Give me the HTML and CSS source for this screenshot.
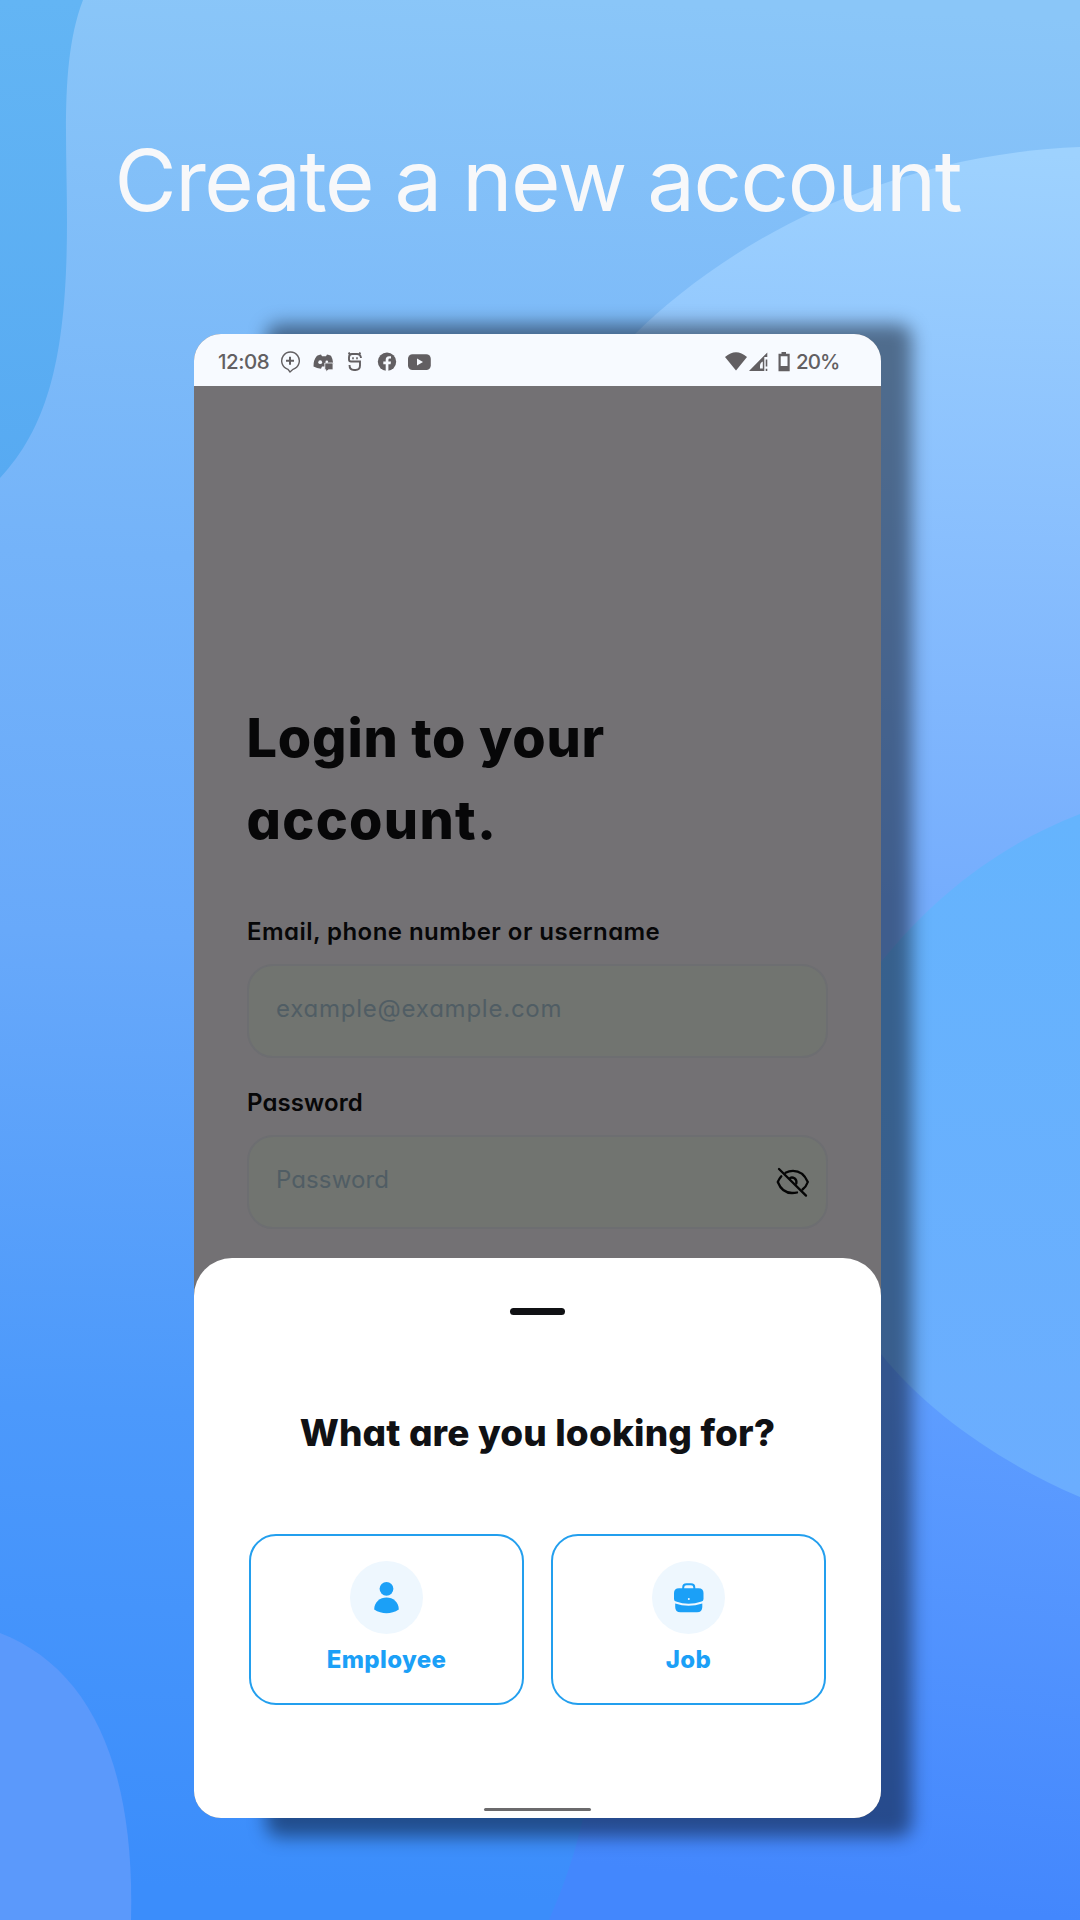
FILE: index.html
```html
<!DOCTYPE html>
<html lang="en">
<head>
<meta charset="utf-8">
<title>Create a new account</title>
<link rel="stylesheet" href="styles.css">
</head>
<body>
<main class="page">
  <svg class="backdrop" viewBox="0 0 1080 1920" aria-hidden="true">
    <defs>
      <linearGradient id="sky" gradientUnits="userSpaceOnUse" x1="570" y1="0" x2="500" y2="1900">
        <stop offset="0" stop-color="#8ac6f8"/><stop offset=".3" stop-color="#74b3f9"/><stop offset=".5" stop-color="#68a9fa"/><stop offset=".75" stop-color="#4c99fb"/><stop offset="1" stop-color="#3b8dfb"/>
      </linearGradient>
      <linearGradient id="corner" x1="0" y1="0" x2="0" y2="1">
        <stop offset="0" stop-color="#63b5f4"/><stop offset="1" stop-color="#57aaf2"/>
      </linearGradient>
      <linearGradient id="wave" gradientUnits="userSpaceOnUse" x1="960" y1="150" x2="930" y2="900">
        <stop offset="0" stop-color="#9ed2fe"/><stop offset="1" stop-color="#75adfd"/>
      </linearGradient>
      <linearGradient id="disc" gradientUnits="userSpaceOnUse" x1="1000" y1="814" x2="980" y2="1490">
        <stop offset="0" stop-color="#65b4fd"/><stop offset="1" stop-color="#6badfe"/>
      </linearGradient>
      <linearGradient id="floor" gradientUnits="userSpaceOnUse" x1="960" y1="1380" x2="900" y2="1900">
        <stop offset="0" stop-color="#5f9eff"/><stop offset="1" stop-color="#4387fd"/>
      </linearGradient>
    </defs>
    <rect width="1080" height="1920" fill="url(#sky)"/>
    <path fill="url(#corner)" d="M0 0H83C60 60 67 140 67 222C67 350 50 425 0 478Z"/>
    <path fill="url(#wave)" d="M1080 147C870 155 715 255 635 334L700 1000H1080Z"/>
    <path fill="url(#floor)" d="M549 1920C575 1860 580 1830 590 1790L860 1300L1080 1400V1920Z"/>
    <path fill="url(#disc)" d="M1080 814C1000 845 935 895 881 962L840 1160L881 1354C930 1415 1005 1465 1080 1497Z"/>
    <path fill="#5b99fb" d="M0 1633C90 1668 135 1765 131 1920H0Z"/>
  </svg>

  <h1 class="title">Create a new account</h1>

  <section class="phone">
    <div class="screen">
      <header class="status">
        <span class="clock">12:08</span>
        <svg class="notifications" viewBox="0 0 156 24" aria-hidden="true">
          <g fill="none" stroke="#625f62" stroke-width="1.4"><path d="M8 19.3A8.800 8.800 0 1 1 13 19.3L10 22Z"/><path stroke-width="2" d="M10 6.7V14.7M6 10.7H14"/></g>
          <path fill="#625f62" d="M37 5.800Q39 4.700 41 4.500L42 6.200H46L47 4.500Q49 4.700 51 5.800Q53 9 53.300 14L48 18.500L46 16.500H42L41 18.800Q37 18.500 33.500 16.500Q33.300 10 37 5.800Z"/>
          <circle cx="40.200" cy="12.200" r="1.900" fill="#f7faff"/><circle cx="46.800" cy="11.800" r="1.300" fill="#f7faff"/>
          <path fill="#625f62" stroke="#f7faff" stroke-width=".8" d="M44.800 13H53V19.800H48.500L46 21.800V19.800H44.800Z"/>
          <g fill="none" stroke="#625f62" stroke-width="1.900"><path d="M68.700 2.500L70 5M80.300 2.500L79 5M81 8Q80.500 4 77 4H72Q69 4 69 7.500V9.500Q69 11.500 71 11.500H80V15.500Q80 20 75.500 20H74Q69.500 20 69.500 15"/><path stroke-width="1.900" d="M72.200 8.300H73.800M76.200 8.300H77.800"/></g>
          <circle cx="107" cy="11.700" r="9.200" fill="#625f62"/>
          <path fill="#f7faff" d="M105.700 21V14.200H103.300V11.600H105.700V9.700Q105.700 6.200 109.100 6.200H111V8.600H109.800Q108.400 8.600 108.400 10V11.600H111L110.600 14.200H108.400V21Z"/>
          <rect x="128" y="4.200" width="22.800" height="15.800" rx="4.500" fill="#625f62"/><path fill="#f7faff" d="M137 8.500V15.500L143 12Z"/>
        </svg>
        <svg class="signals" viewBox="0 0 66 20" aria-hidden="true">
          <g fill="#625f62"><path d="M0 5Q11-4.500 22 5L11 18.500Z"/><path fill-rule="evenodd" d="M24 19L42.300 .5V5H39.300V19ZM35 16.500H37.800V9.500Q35 10.500 35 14Z"/><path d="M40.700 7.500H42.300V14.500H40.700ZM40.700 16.800H42.300V19H40.700Z"/><path fill-rule="evenodd" d="M53.500 1.700H56.500V0H61V1.700H64.700V19.200H53.500ZM55.700 4.200V14H62.500V4.200Z"/></g>
        </svg>
        <span class="battery">20%</span>
      </header>

      <div class="login">
        <h2 class="login-title"><span class="line">Login to your</span><span class="line line-wide">account.</span></h2>
        <div class="field">
          <span class="label">Email, phone number or username</span>
          <div class="input"><span class="placeholder">example@example.com</span></div>
        </div>
        <div class="field">
          <span class="label label-password">Password</span>
          <div class="input"><span class="placeholder placeholder-password">Password</span>
            <svg class="eye-off" viewBox="0 0 34 32" aria-hidden="true"><g fill="none" stroke="#050505" stroke-width="2.300" stroke-linecap="round"><path d="M9.500 5.800Q13 3.900 17 3.900C24 3.900 29 8.500 31.800 15Q30.300 19.500 26.500 22.500M5.300 9.300Q3 12 1.800 15C4.500 22 10 26 16 26Q19 26 21 25.500"/><path d="M14.200 11Q16 9.900 18.500 11.200Q21 13 20.300 16.500"/><path d="M3 2L30 28.600"/></g></svg>
          </div>
        </div>
      </div>

      <div class="sheet">
        <div class="handle"></div>
        <h3 class="question">What are you looking for?</h3>
        <div class="choices">
          <div class="choice">
            <svg class="badge" viewBox="0 0 73 73" aria-hidden="true"><circle cx="36.500" cy="36.500" r="36.500" fill="#eef7fe"/><g fill="#1ba0f7"><circle cx="36.500" cy="27.800" r="6.900"/><path d="M24.200 48.500C24.200 41 30 36.500 36.500 36.500S48.800 41 48.800 48.500Q43 52.300 36.500 52.300T24.200 48.500Z"/></g></svg>
            <span class="choice-name">Employee</span>
          </div>
          <div class="choice">
            <svg class="badge" viewBox="0 0 73 73" aria-hidden="true"><circle cx="36.500" cy="36.500" r="36.500" fill="#eef7fe"/><path fill="none" stroke="#1ba0f7" stroke-width="2" d="M31.200 28V26.500Q31.200 23.300 34.500 23.300H39Q42.300 23.300 42.300 26.500V28"/><g fill="#1ba0f7"><path d="M27 27.300H46.500Q51.500 27.300 51.500 32V38Q51.500 40 49.500 40.500Q36.500 45 24 40.500Q22 40 22 38V32Q22 27.300 27 27.300Z"/><path d="M23.200 42.500Q36.500 47 50.300 42.500V46Q50.300 51.300 45 51.300H28.500Q23.200 51.300 23.200 46Z"/></g><circle cx="36.800" cy="38" r="1" fill="#eef7fe"/></svg>
            <span class="choice-name choice-name-short">Job</span>
          </div>
        </div>
        <div class="home-bar"></div>
      </div>
    </div>
  </section>
</main>
</body>
</html>
```
FILE: styles.css
```css
* { box-sizing: border-box; }
body { margin: 0; font-family: Inter, sans-serif; }
h1, h2, h3 { margin: 0; }

.page {
  position: relative;
  width: 1080px;
  height: 1920px;
  overflow: hidden;
  padding-top: 131px;
}
.backdrop { position: absolute; inset: 0; width: 1080px; height: 1920px; }

.title {
  position: relative;
  font-size: 85px;
  line-height: 100px;
  font-weight: 400;
  letter-spacing: -1.450px;
  word-spacing: -1px;
  padding-left: 114.500px;
  white-space: nowrap;
  color: #f7f8fa;
}

.phone {
  position: relative;
  width: 687px;
  height: 1484px;
  margin: 103px 0 0 194px;
  font-feature-settings: "cv11";
}
.phone::before {
  content: "";
  position: absolute;
  left: 72px;
  top: -10px;
  width: 646px;
  height: 1513px;
  border-radius: 14px;
  background: rgba(0, 0, 8, .46);
  filter: blur(9px);
}
.screen {
  position: relative;
  height: 100%;
  border-radius: 27px;
  overflow: hidden;
  background: #737174;
}

.status {
  display: flex;
  align-items: center;
  height: 52px;
  padding: 2px 41px 0 24px;
  background: #f7faff;
  color: #625f62;
  font-size: 20.500px;
  font-weight: 500;
}
.clock { width: 52px; letter-spacing: -.450px; }
.notifications { width: 156px; height: 24px; margin: 1px auto 0 9.500px; }
.signals { width: 66px; height: 20px; margin-right: 5px; margin-top: 1px; }
.battery { width: 44px; letter-spacing: -.900px; }

.login { padding: 311px 53px 0; color: #070708; }
.login-title { font-size: 54px; line-height: 82px; font-weight: 800; margin-bottom: 55.500px; }
.line { display: block; letter-spacing: .800px; margin-left: -.500px; }
.line-wide { letter-spacing: 1.300px; }
.field { margin-bottom: 29px; }
.label {
  display: block;
  font-size: 24px;
  line-height: 30px;
  font-weight: 600;
  letter-spacing: .450px;
}
.label-password { letter-spacing: .100px; }
.input {
  display: flex;
  align-items: center;
  justify-content: space-between;
  height: 94px;
  margin-top: 17.500px;
  margin-bottom: 29.500px;
  padding: 0 16.500px 6px 27px;
  border: 2px solid #6d6e71;
  border-radius: 26px;
  background: #717470;
}
.placeholder { font-size: 24px; letter-spacing: .770px; color: #505d64; }
.placeholder-password { letter-spacing: .100px; }
.field { margin-bottom: 0; }
.eye-off { width: 34px; height: 32px; margin-top: 7px; }

.sheet {
  position: absolute;
  left: 0;
  right: 0;
  bottom: 0;
  height: 560px;
  display: flex;
  flex-direction: column;
  align-items: center;
  padding: 50px 55px 7px;
  border-radius: 38px 38px 0 0;
  background: #fff;
}
.handle { width: 55px; height: 7px; border-radius: 4px; background: #101114; }
.question {
  margin-top: 93px;
  font-size: 37px;
  line-height: 50px;
  font-weight: 800;
  letter-spacing: .150px;
  white-space: nowrap;
  color: #101114;
}
.choices {
  display: grid;
  grid-template-columns: 1fr 1fr;
  gap: 27px;
  width: 577px;
  margin-top: 76px;
}
.choice {
  display: flex;
  flex-direction: column;
  align-items: center;
  height: 171px;
  padding-top: 25px;
  border: 2px solid #239fee;
  border-radius: 27px;
}
.badge { width: 73px; height: 73px; }
.choice-name {
  margin-top: 11px;
  font-size: 24px;
  line-height: 30px;
  font-weight: 800;
  letter-spacing: .350px;
  color: #1ba0f7;
}
.home-bar { width: 107px; height: 3px; margin-top: auto; border-radius: 2px; background: #6b6a6c; }
```
